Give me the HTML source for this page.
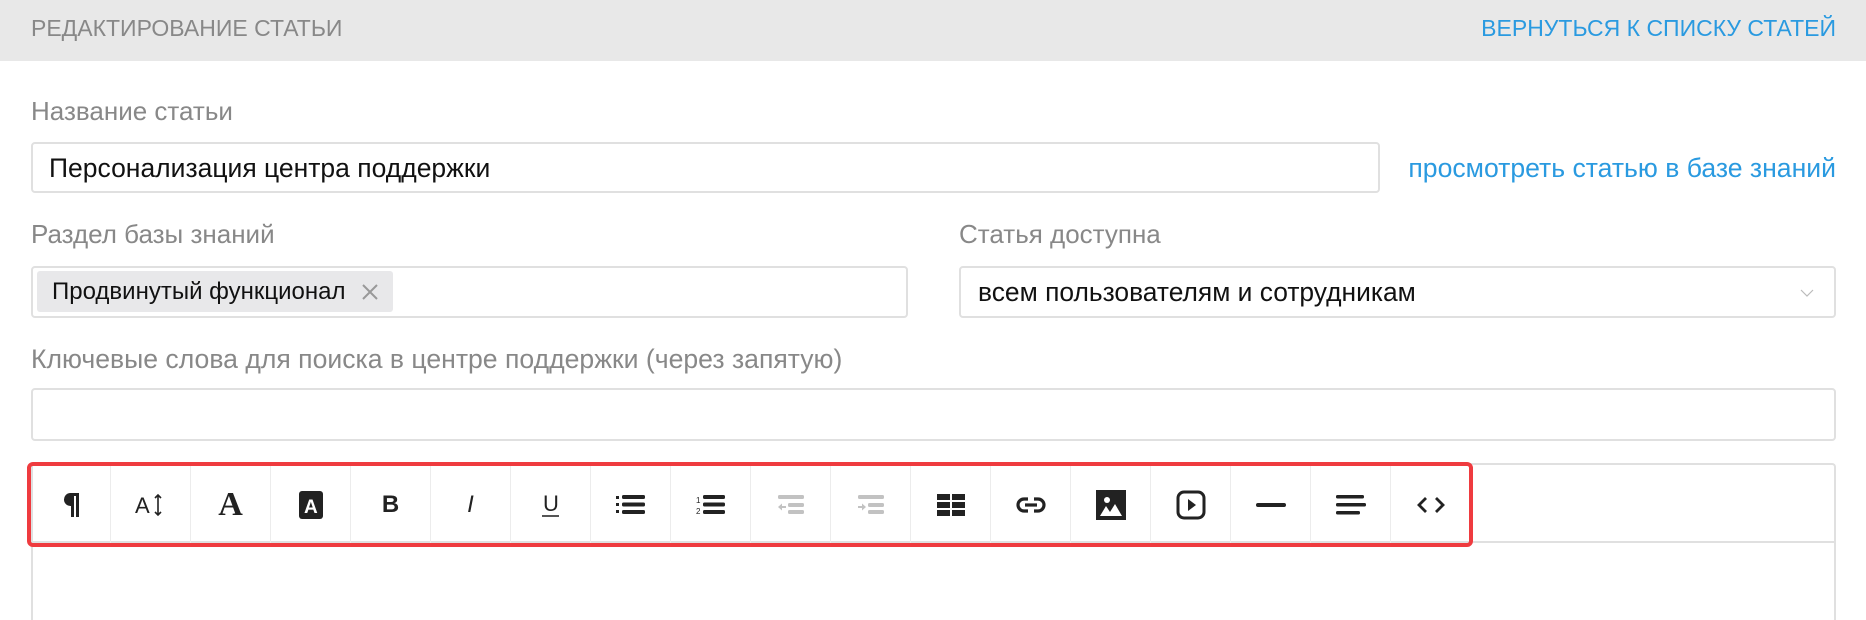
<!DOCTYPE html>
<html><head><meta charset="utf-8"><style>
*{box-sizing:border-box;margin:0;padding:0}
html,body{width:1866px;height:620px;overflow:hidden}
body{background:#fff;font-family:"Liberation Sans","Noto Sans CJK SC",sans-serif;position:relative}
.a{position:absolute;white-space:nowrap;line-height:1}
.hdr{left:0;top:0;width:1866px;height:61px;background:#e8e8e8}
.lbl{color:#888;font-size:26px}
.inp{border:2px solid #e0e0e0;border-radius:4px;background:#fff}
.blue{color:#2a9ae0;font-size:26.6px}
.btn{position:absolute;top:0;width:80px;height:77px;border-right:1px solid #ececec;display:flex;align-items:center;justify-content:center}
</style></head><body>
<div class="a hdr"></div>
<div class="a" style="left:31px;top:17px;font-size:23px;color:#888">РЕДАКТИРОВАНИЕ СТАТЬИ</div>
<div class="a blue" style="right:30px;top:17px;font-size:23px">ВЕРНУТЬСЯ К СПИСКУ СТАТЕЙ</div>

<div class="a lbl" style="left:31px;top:98px">Название статьи</div>
<div class="a inp" style="left:31px;top:142px;width:1349px;height:51px"></div>
<div class="a" style="left:49px;top:155px;font-size:26.5px;color:#111">Персонализация центра поддержки</div>
<div class="a blue" style="right:30px;top:155px">просмотреть статью в базе знаний</div>

<div class="a lbl" style="left:31px;top:221px">Раздел базы знаний</div>
<div class="a lbl" style="left:959px;top:221px">Статья доступна</div>
<div class="a inp" style="left:31px;top:266px;width:877px;height:52px"></div>
<div class="a" style="left:37px;top:271px;width:356px;height:41px;background:#e8e8ea;border-radius:3px"></div>
<div class="a" style="left:52px;top:280px;font-size:24px;color:#111">Продвинутый функционал</div>
<svg class="a" style="left:360px;top:282px" width="20" height="20" viewBox="0 0 20 20"><path d="M3 3L17 17M17 3L3 17" stroke="#999" stroke-width="2"/></svg>
<div class="a inp" style="left:959px;top:266px;width:877px;height:52px"></div>
<div class="a" style="left:978px;top:279px;font-size:26.4px;color:#111">всем пользователям и сотрудникам</div>
<svg class="a" style="left:1800px;top:288px" width="14" height="10" viewBox="0 0 14 10"><path d="M1 2L7 8L13 2" stroke="#bbb" stroke-width="1.2" fill="none"/></svg>

<div class="a lbl" style="left:31px;top:346px;font-size:26.6px">Ключевые слова для поиска в центре поддержки (через запятую)</div>
<div class="a inp" style="left:31px;top:388px;width:1805px;height:53px"></div>

<div class="a" style="left:31px;top:463px;width:1805px;height:157px;border:2px solid #e0e0e0;border-bottom:none;border-radius:4px 4px 0 0"></div>
<div class="a" style="left:31px;top:541px;width:1805px;height:2px;background:#e0e0e0"></div>
<div class="a" style="left:27px;top:462px;width:1446px;height:85px;border:4px solid #ef3b3f;border-radius:6px"></div>
<div class="a" style="left:31px;top:466px;width:1440px;height:77px">
<div class="btn" style="left:0"><svg width="20" height="28" viewBox="0 0 20 28"><path d="M9 2H18V26H15V5H13V26H10V15A6.5 6.5 0 0 1 9 2Z" fill="#222"/></svg></div>
<div class="btn" style="left:80px"><svg width="32" height="28" viewBox="0 0 32 28"><text x="0" y="22" font-family="Liberation Sans" font-size="22" fill="#222">A</text><path d="M23 4V24M20 7L23 4L26 7M20 21L23 24L26 21" stroke="#222" stroke-width="1.6" fill="none"/></svg></div>
<div class="btn" style="left:160px"><span style="font-size:34px;font-family:'Liberation Serif',serif;color:#222;font-weight:bold;line-height:1">A</span></div>
<div class="btn" style="left:240px"><svg width="24" height="28" viewBox="0 0 24 28"><rect x="0" y="0" width="24" height="28" rx="3" fill="#222"/><text x="5" y="22" font-family="Liberation Sans" font-weight="bold" font-size="19" fill="#fff">A</text></svg></div>
<div class="btn" style="left:320px"><span style="font-size:24px;font-weight:bold;color:#222">B</span></div>
<div class="btn" style="left:400px"><span style="font-size:24px;font-style:italic;color:#222">I</span></div>
<div class="btn" style="left:480px"><svg width="20" height="28" viewBox="0 0 20 28"><text x="2" y="20" font-family="Liberation Sans" font-size="22" fill="#222">U</text><rect x="1" y="24" width="17" height="2" fill="#555"/></svg></div>
<div class="btn" style="left:560px"><svg width="30" height="22" viewBox="0 0 30 22"><g fill="#222"><rect x="0" y="2" width="3" height="3"/><rect x="0" y="9" width="3" height="3"/><rect x="0" y="16" width="3" height="3"/><rect x="6" y="1" width="23" height="4" rx="1.5"/><rect x="6" y="8.5" width="23" height="4" rx="1.5"/><rect x="6" y="16" width="23" height="4" rx="1.5"/></g></svg></div>
<div class="btn" style="left:640px"><svg width="30" height="22" viewBox="0 0 30 22"><g fill="#222"><text x="0" y="9" font-size="8" font-family="Liberation Sans">1</text><text x="0" y="20" font-size="8" font-family="Liberation Sans">2</text><rect x="7" y="1" width="22" height="4" rx="1.5"/><rect x="7" y="8.5" width="22" height="4" rx="1.5"/><rect x="7" y="16" width="22" height="4" rx="1.5"/></g></svg></div>
<div class="btn" style="left:720px"><svg width="30" height="22" viewBox="0 0 30 22"><g fill="#c2c2c2"><rect x="2" y="1" width="26" height="4" rx="1.5"/><rect x="12" y="9" width="16" height="4" rx="1.5"/><rect x="12" y="16" width="16" height="4" rx="1.5"/><path d="M2 13L6 9.5V16.5Z"/><rect x="5" y="12" width="5" height="2"/></g></svg></div>
<div class="btn" style="left:800px"><svg width="30" height="22" viewBox="0 0 30 22"><g fill="#c2c2c2"><rect x="2" y="1" width="26" height="4" rx="1.5"/><rect x="12" y="9" width="16" height="4" rx="1.5"/><rect x="12" y="16" width="16" height="4" rx="1.5"/><path d="M10 13L6 9.5V16.5Z"/><rect x="2" y="12" width="5" height="2"/></g></svg></div>
<div class="btn" style="left:880px"><svg width="28" height="22" viewBox="0 0 28 22"><g fill="#222"><rect x="0" y="0" width="13" height="6"/><rect x="15" y="0" width="13" height="6"/><rect x="0" y="8" width="13" height="6"/><rect x="15" y="8" width="13" height="6"/><rect x="0" y="16" width="13" height="6"/><rect x="15" y="16" width="13" height="6"/></g></svg></div>
<div class="btn" style="left:960px"><svg width="32" height="20" viewBox="0 0 32 20"><g stroke="#222" stroke-width="3.2" fill="none"><path d="M13 4H9a6 6 0 0 0 0 12h4"/><path d="M19 4h4a6 6 0 0 1 0 12h-4"/><path d="M10 10H22"/></g></svg></div>
<div class="btn" style="left:1040px"><svg width="30" height="30" viewBox="0 0 30 30"><rect x="0" y="0" width="30" height="30" fill="#222"/><circle cx="11" cy="10" r="3" fill="#fff"/><path d="M4 26L10 16L14 22L19 14L26 26Z" fill="#fff"/></svg></div>
<div class="btn" style="left:1120px"><svg width="30" height="30" viewBox="0 0 30 30"><rect x="2" y="2" width="26" height="26" rx="6" fill="none" stroke="#222" stroke-width="3"/><path d="M12 9L20 15L12 21Z" fill="#222"/></svg></div>
<div class="btn" style="left:1200px"><svg width="30" height="6" viewBox="0 0 30 6"><rect x="0" y="1" width="30" height="4" rx="2" fill="#222"/></svg></div>
<div class="btn" style="left:1280px"><svg width="30" height="22" viewBox="0 0 30 22"><g fill="#222"><rect x="0" y="1" width="28" height="3.5" rx="1.5"/><rect x="0" y="9" width="30" height="3.5" rx="1.5"/><rect x="0" y="17" width="24" height="3.5" rx="1.5"/></g></svg></div>
<div class="btn" style="left:1360px;border-right:none"><svg width="30" height="20" viewBox="0 0 30 20"><path d="M10 3L3 10L10 17M20 3L27 10L20 17" stroke="#222" stroke-width="2.8" fill="none"/></svg></div>
</div>
</body></html>
